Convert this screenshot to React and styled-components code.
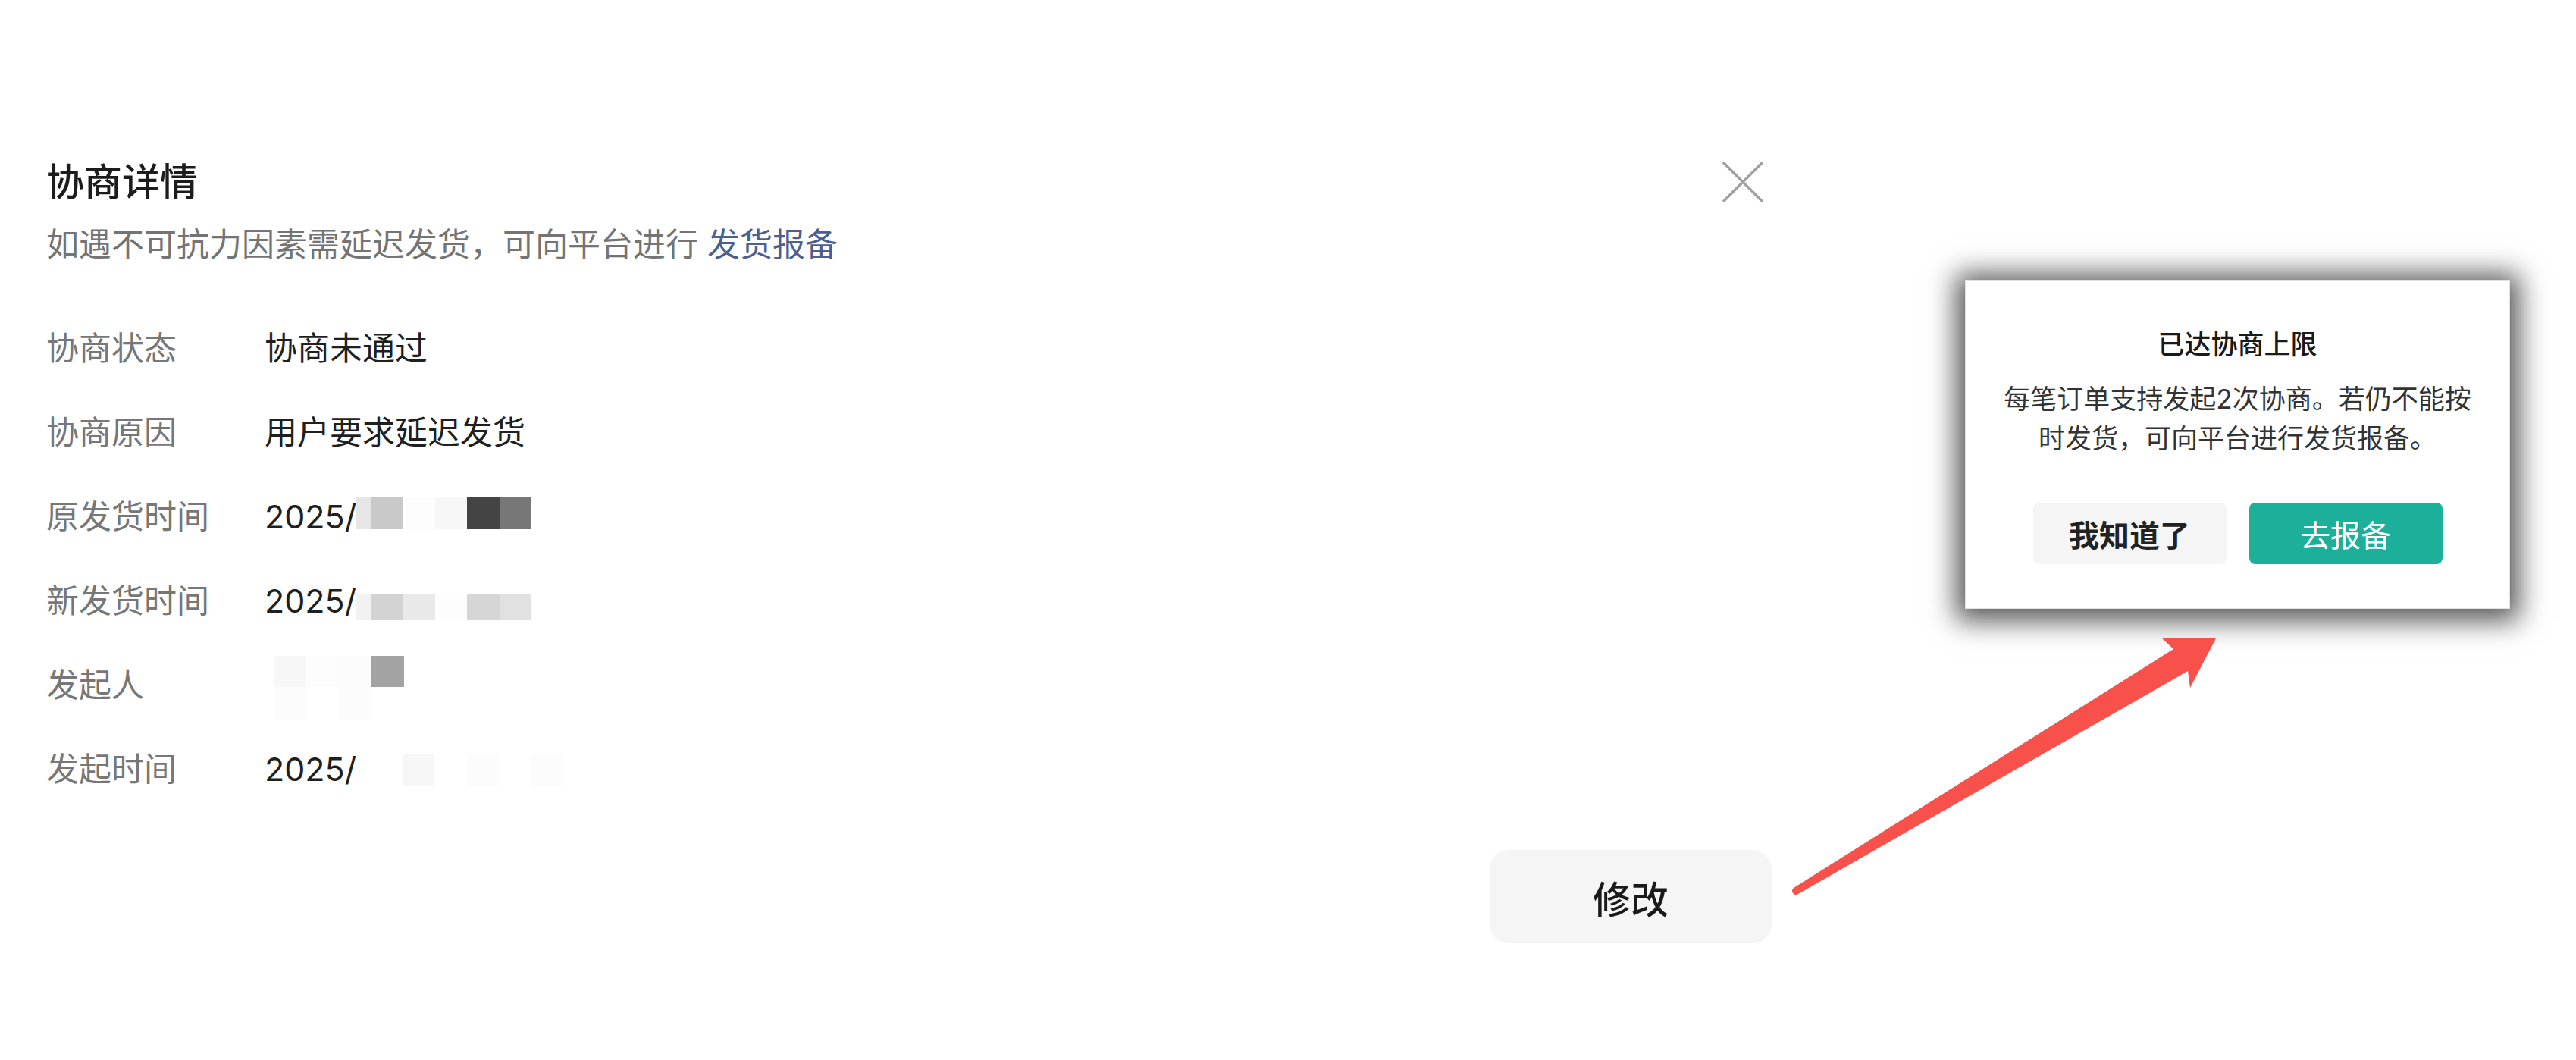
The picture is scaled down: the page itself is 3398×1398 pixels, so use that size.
import styled, { createGlobalStyle } from "styled-components";

const GlobalStyle = createGlobalStyle`
    html, body {
        margin: 0;
        padding: 0;
        background: #ffffff;
    }
    body {
        font-family: Inter, "Noto Sans CJK SC", sans-serif;
        -webkit-font-smoothing: antialiased;
    }
`

const Page = styled.div`
    position: relative;
    width: 3398px;
    height: 1398px;
    overflow: hidden;
    background: #ffffff;
`

const Panel = styled.section`
    width: 2276px;
    padding: 205px 0 0 61px;
    display: flex;
    flex-direction: column;
`

const Header = styled.header`
    display: flex;
    justify-content: space-between;
    align-items: flex-start;
`

const Title = styled.h1`
    margin: 0;
    font-size: 50px;
    line-height: 70px;
    font-weight: 500;
    color: #1c1c1c;
`

const Subtitle = styled.p`
    margin: 17px 0 0;
    font-size: 43px;
    line-height: 60px;
    color: #747474;

    a{
        color: #4d5f8f;
        text-decoration: none;
    }
`

const CloseButton = styled.button`
    width: 70px;
    height: 70px;
    margin-right: 3px;
    padding: 0;
    border: none;
    background: transparent;
    display: flex;
    align-items: center;
    justify-content: center;
    cursor: pointer;
`

const Fields = styled.dl`
    margin: 77px 0 0;
    display: flex;
    flex-direction: column;
    gap: 51px;
`

const Field = styled.div`
    display: flex;
    align-items: center;
    min-height: 60px;
`

const Label = styled.dt`
    width: 288px;
    margin: 0;
    font-size: 43px;
    line-height: 60px;
    color: #777777;
`

const Value = styled.dd`
    position: relative;
    flex: 1;
    min-height: 60px;
    margin: 0;
    font-size: 43px;
    line-height: 60px;
    color: #1f1f1f;
`

// pixelated blur that hides part of the value
const Redaction = styled.div`
    position: absolute;
    left: ${p => p.$left}px;
    top: ${p => p.$top}px;
    display: flex;
    flex-direction: column;
`

const MosaicRow = styled.div`
    display: flex;
`

const Cell = styled.span`
    width: ${p => p.$w}px;
    height: ${p => p.$h}px;
    background: ${p => p.$c};
`

const Footer = styled.footer`
    margin-top: 77px;
    display: flex;
    justify-content: flex-end;
`

const EditButton = styled.button`
    width: 372px;
    height: 123px;
    border: none;
    border-radius: 25px;
    background: #f5f5f5;
    font-family: inherit;
    font-size: 50px;
    font-weight: 500;
    color: #1a1a1a;
    cursor: pointer;
`

const Popup = styled.div`
    position: absolute;
    left: 2592px;
    top: 369px;
    width: 719px;
    box-sizing: border-box;
    padding: 59px 44px 58px;
    background: #ffffff;
    border: 1px solid #e2e2e2;
    box-shadow: 0 4px 34px 12px rgba(0, 0, 0, 0.66);
    display: flex;
    flex-direction: column;
    align-items: center;
    text-align: center;
`

const PopupTitle = styled.h2`
    margin: 0;
    font-size: 35px;
    line-height: 50px;
    font-weight: 500;
    color: #1a1a1a;
`

const PopupText = styled.p`
    margin: 21px 0 0;
    font-size: 35px;
    line-height: 52px;
    color: #333333;
`

const PopupActions = styled.div`
    margin-top: 59px;
    display: flex;
    gap: 30px;
`

const ActionButton = styled.button`
    width: 255px;
    height: 81px;
    border: none;
    border-radius: 8px;
    background: ${p => p.$primary ? '#1cb09b' : '#f5f5f5'};
    color: ${p => p.$primary ? '#ffffff' : '#222222'};
    font-family: inherit;
    font-size: 40px;
    font-weight: ${p => p.$primary ? 400 : 600};
    cursor: pointer;
`

const Arrow = styled.svg`
    position: absolute;
    left: 2355px;
    top: 830px;
    width: 580px;
    height: 360px;
    pointer-events: none;
`

const campos = [
    { label: '协商状态', valor: '协商未通过' },
    { label: '协商原因', valor: '用户要求延迟发货' },
    {
        label: '原发货时间', valor: '2025/',
        mosaico: { left: 121, top: 5, linhas: [[[20, '#e6e6e6'], [42, '#c9c9c9'], [42, '#fdfdfd'], [42, '#f7f7f7'], [43, '#444444'], [42, '#777777']]], alturas: [42] }
    },
    {
        label: '新发货时间', valor: '2025/',
        mosaico: { left: 121, top: 22, linhas: [[[20, '#f2f2f2'], [42, '#d3d3d3'], [42, '#e9e9e9'], [42, '#fdfdfd'], [43, '#d6d6d6'], [42, '#e1e1e1']]], alturas: [34] }
    },
    {
        label: '发起人', valor: '',
        mosaico: {
            left: 13, top: -8,
            linhas: [
                [[42, '#f7f7f7'], [42, '#fdfdfd'], [44, '#fcfcfc'], [43, '#a3a3a3']],
                [[42, '#fcfcfc'], [42, '#ffffff'], [44, '#fcfcfc']],
            ],
            alturas: [41, 43]
        }
    },
    {
        label: '发起时间', valor: '2025/',
        mosaico: { left: 183, top: 10, linhas: [[[41, '#f7f7f7'], [42, '#ffffff'], [43, '#fcfcfc'], [42, '#ffffff'], [42, '#fcfcfc']]], alturas: [42] }
    },
]

const Mosaico = ({ left, top, linhas, alturas }) => (
    <Redaction $left={left} $top={top}>
        {linhas.map((linha, i) => (
            <MosaicRow key={i}>
                {linha.map(([w, c], j) => <Cell key={j} $w={w} $h={alturas[i]} $c={c} />)}
            </MosaicRow>
        ))}
    </Redaction>
)

const App = () => {
    return (
        <>
            <GlobalStyle />
            <Page>
                <Panel>
                    <Header>
                        <div>
                            <Title>协商详情</Title>
                            <Subtitle>如遇不可抗力因素需延迟发货，可向平台进行 <a href="#">发货报备</a></Subtitle>
                        </div>
                        <CloseButton aria-label="关闭">
                            <svg width="56" height="56" viewBox="0 0 56 56">
                                <path d="M3 3 L53 53 M53 3 L3 53" stroke="#a0a0a0" strokeWidth="3.5" strokeLinecap="round" fill="none" />
                            </svg>
                        </CloseButton>
                    </Header>

                    <Fields>
                        {campos.map(campo => (
                            <Field key={campo.label}>
                                <Label>{campo.label}</Label>
                                <Value>
                                    {campo.valor}
                                    {campo.mosaico && <Mosaico {...campo.mosaico} />}
                                </Value>
                            </Field>
                        ))}
                    </Fields>

                    <Footer>
                        <EditButton>修改</EditButton>
                    </Footer>
                </Panel>

                <Popup>
                    <PopupTitle>已达协商上限</PopupTitle>
                    <PopupText>每笔订单支持发起2次协商。若仍不能按时发货，可向平台进行发货报备。</PopupText>
                    <PopupActions>
                        <ActionButton>我知道了</ActionButton>
                        <ActionButton $primary>去报备</ActionButton>
                    </PopupActions>
                </Popup>

                <Arrow viewBox="0 0 580 360">
                    <path
                        d="M512 26 L496 11 L568 12 L534 77 L531 55 L16.6 349.3 A5 5 0 0 1 11.4 340.7 Z"
                        fill="#f8504b"
                    />
                </Arrow>
            </Page>
        </>
    )
}

export default App;
